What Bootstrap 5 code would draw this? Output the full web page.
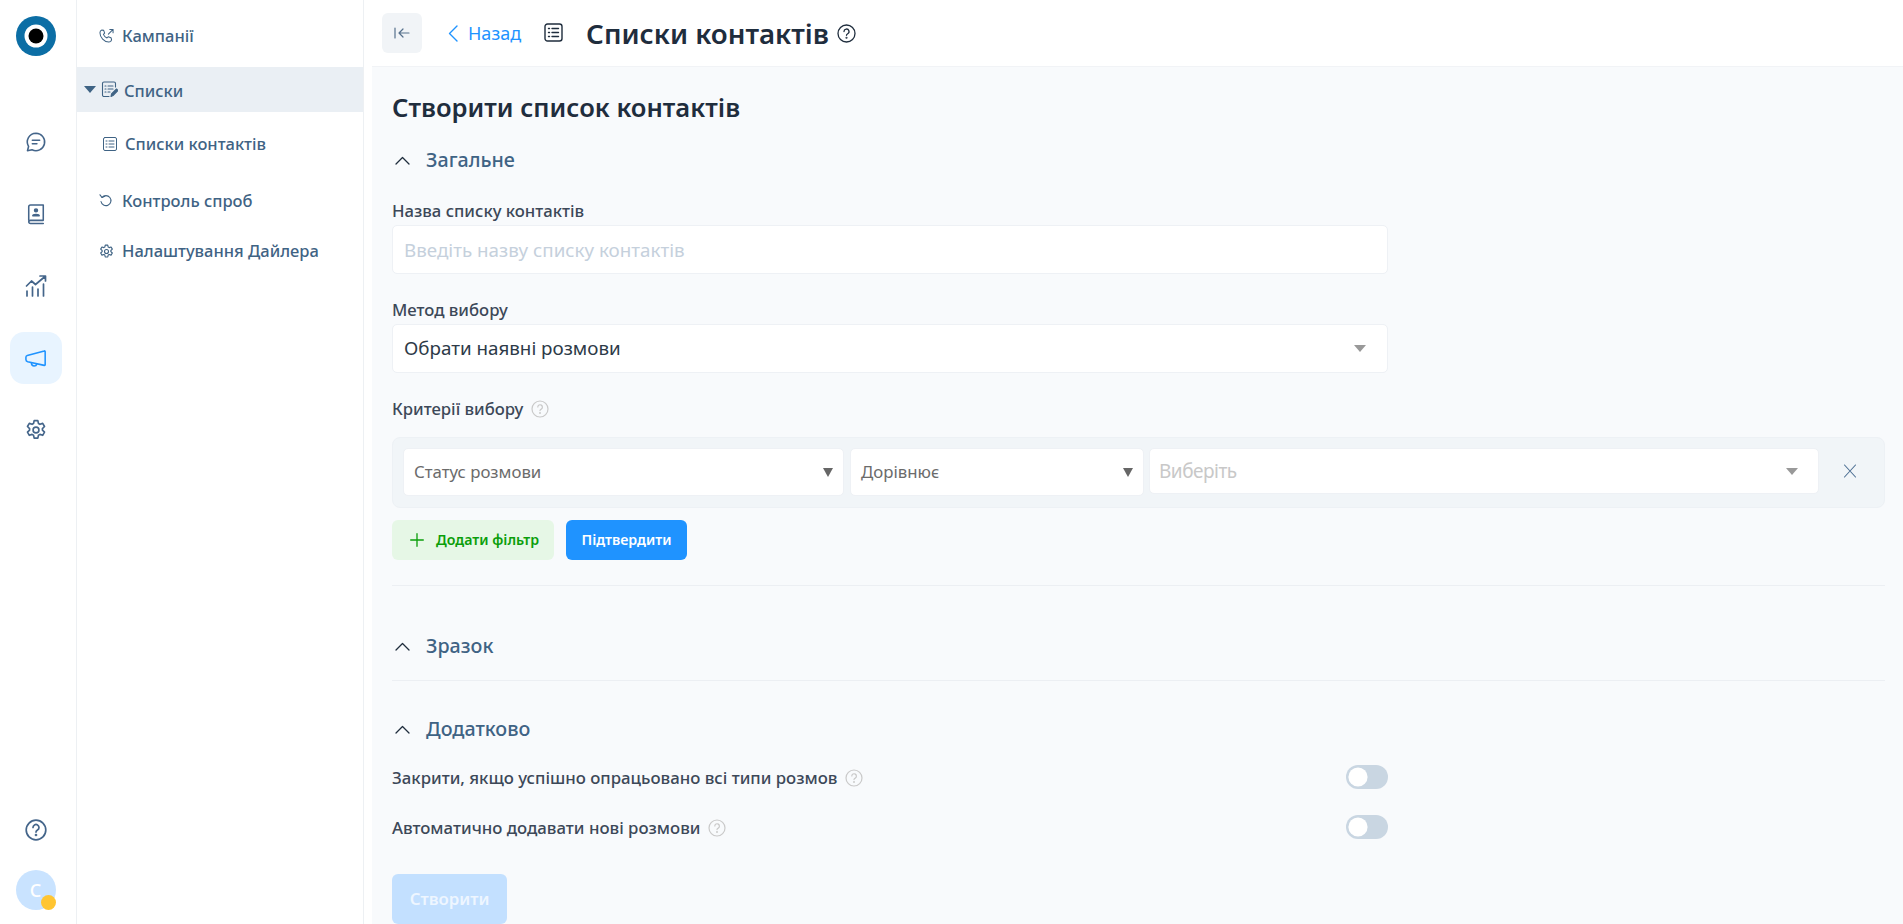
<!DOCTYPE html>
<html lang="uk">
<head>
  <meta charset="UTF-8">
  <title>Списки контактів</title>
  <link href="https://cdn.jsdelivr.net/npm/bootstrap@5.3.3/dist/css/bootstrap.min.css" rel="stylesheet">
  <style>
    html, body { height: 100%; overflow: hidden; }
    body { font-family: "Noto Sans", sans-serif; color: #1f2d3d; background: #fff; }
    svg { display: block; flex: none; }

    .app-shell { height: 924px; }
    .rail { width: 77px; border-right: 1px solid #edf0f3; color: #3f6384; padding-right: 4px; }
    .rail-logo { margin-top: 16px; width: 40px; height: 40px; }
    .rail-btn { width: 52px; height: 52px; border-radius: 14px; color: #44658a; }
    .rail-btn.is-on { background: #e8f4ff; color: #1f93ff; }
    .rail-mid { margin-top: 60px; gap: 20px; }
    .rail-foot { margin-bottom: 14px; }
    .avatar-c { width: 40px; height: 40px; border-radius: 50%; background: #c9e3ff; color: #fff; font-size: 18px; font-weight: 500; margin-top: 29px; padding-right: 1px; }
    .avatar-dot { width: 15px; height: 15px; border-radius: 50%; background: #ffc532; right: 0; bottom: 0; }

    .side { width: 287px; border-right: 1px solid #edf0f3; color: #3f6384; font-size: 16.5px; font-weight: 500; }
    .side-row { gap: 8px; padding-left: 22px; color: #3f6384; text-decoration: none; }
    .side-head { height: 45px; background: #eaeff4; padding-left: 7px; gap: 5px; font-weight: 500; }
    .side-head span:last-child { padding-top: 3px; margin-left: 1px; }
    .side-caret { width: 0; height: 0; border-left: 6px solid transparent; border-right: 6px solid transparent; border-top: 7px solid #3f6384; }

    .top-bar { height: 66px; padding-left: 18px; }
    .back-toggle { width: 40px; height: 40px; border-radius: 6px; background: #f1f4f7; color: #56708c; border: 0; padding: 0; }
    .back-link { color: #1f93ff; text-decoration: none; font-size: 18px; margin-left: 26px; gap: 10px; }
    .list-mark { margin-left: 23px; margin-bottom: 2px; }
    .page-title { font-size: 27.7px; font-weight: 600; margin: 0 0 0 23px; color: #1f2d3d; line-height: 1.3; }

    .work { background: #f8fafc; margin-left: 8px; padding: 20px 18px 0 20px; border-top: 1px solid #f1f3f6; min-height: 0; }
    .work-title { font-size: 25.6px; font-weight: 600; line-height: 42px; margin: 0; color: #1f2d3d; }
    .sect-head { gap: 16px; font-size: 19.7px; font-weight: 500; color: #3f6384; line-height: 26px; height: 26px; }
    .sect-chev { margin-left: 3px; }
    .form-narrow { width: 996px; }
    .f-label { font-size: 16.7px; font-weight: 500; color: #3c4858; line-height: 22px; margin: 0; }
    .f-box { height: 49px; border: 1px solid #eef1f5; border-radius: 5px; font-size: 18.8px; color: #2d3a48; padding: 0 11px; box-shadow: none; }
    .f-box::placeholder { color: #c5d0dc; }
    .q-mark { width: 18px; height: 18px; }
    .caret-d { width: 0; height: 0; border-left: 6px solid transparent; border-right: 6px solid transparent; border-top: 7px solid #999; }
    .caret-pad { margin-right: 10px; }
    .crit-panel { background: #f1f5f8; border: 1px solid #edf1f5; border-radius: 8px; height: 71px; padding: 10px 10px 0; gap: 6px; margin-top: 17px; }
    .crit-cell { height: 48px; background: #fff; border: 1px solid #eef1f5; border-radius: 5px; padding: 0 10px; font-size: 16.8px; color: #6b6b6b; }
    .crit-a { width: 441px; }
    .crit-b { width: 294px; margin-right: -1px; }
    .crit-c { flex: 1 1 0; height: 46px; color: #c8c8c8; font-size: 19px; letter-spacing: -.5px; padding-left: 9px; }
    .crit-x { width: 48px; height: 46px; margin-left: 1px; color: #4c6f93; }
    .caret-s { border-left-width: 5px; border-right-width: 5px; border-top: 9px solid #666; }
    .act-add, .act-ok { height: 40px; border-radius: 6px; border: 0; font-size: 14.2px; font-weight: 600; }
    .act-add { width: 162px; background: #e6f7e6; color: #0a9e0a; gap: 12px; padding: 0 0 0 18px; }
    .act-ok { width: 121px; background: #1f93ff; color: #fff; }
    .line-rule { height: 1px; background: #eceff3; }
    .opt-row { height: 24px; font-size: 16.8px; font-weight: 500; color: #3c4858; }
    .form-switch .tgl { width: 42px; height: 24px; margin: 0; float: none; background-color: #c9d6e2; border: 0; box-shadow: none;
      background-image: url("data:image/svg+xml,%3Csvg xmlns='http://www.w3.org/2000/svg' viewBox='-4 -4 8 8'%3E%3Ccircle r='3.2' fill='%23fff'/%3E%3C/svg%3E"); background-position: left center; }
    .form-switch.tgl-wrap { padding: 0; min-height: 0; margin: 0; }
    .act-make { width: 115px; height: 50px; border: 0; border-radius: 6px; background: #c3e0ff; color: #eef6ff; font-size: 16.8px; font-weight: 600; }
  </style>
</head>
<body>
  <div class="app-shell d-flex">

    <!-- icon rail -->
    <aside class="rail d-flex flex-column align-items-center flex-none">
      <svg class="rail-logo" viewBox="0 0 40 40">
        <circle cx="20" cy="20" r="20" fill="#0c6ea5"/>
        <circle cx="20" cy="20" r="11.5" fill="#fff"/>
        <circle cx="20" cy="20" r="7.5" fill="#000"/>
      </svg>
      <div class="rail-mid d-flex flex-column align-items-center">
        <a class="rail-btn d-flex align-items-center justify-content-center">
          <svg width="22" height="22" viewBox="0 0 24 24" fill="none" stroke="currentColor" stroke-width="1.7" stroke-linecap="round" stroke-linejoin="round"><path d="M12 2.5a9.500 9.500 0 1 1-4.300 18l-5 1 1.200-4.600A9.500 9.500 0 0 1 12 2.500z"/><path d="M8 10h8M8 14h5"/></svg>
        </a>
        <a class="rail-btn d-flex align-items-center justify-content-center">
          <svg width="20" height="22" viewBox="0 0 22 24" fill="none" stroke="currentColor" stroke-width="1.7" stroke-linecap="round" stroke-linejoin="round"><path d="M3 19V4a2 2 0 0 1 2-2h14v17H5a2 2 0 0 0-2 2v0a2 2 0 0 0 2 1.500h14"/><circle cx="11" cy="8" r="1.600" fill="currentColor"/><path d="M7.500 14c0-2 7-2 7 0z" fill="currentColor"/></svg>
        </a>
        <a class="rail-btn d-flex align-items-center justify-content-center">
          <svg width="22" height="22" viewBox="0 0 22 22" fill="none" stroke="currentColor" stroke-width="1.700" stroke-linecap="round" stroke-linejoin="round"><path d="M1.500 11l5-5 4 3.500L20 1.500M15 1h5.500v5M2 16v5M7.500 12v9M13 14v7M18.500 9v12"/></svg>
        </a>
        <a class="rail-btn is-on d-flex align-items-center justify-content-center">
          <svg width="22" height="19" viewBox="0 0 24 20" fill="none" stroke="currentColor" stroke-width="1.700" stroke-linecap="round" stroke-linejoin="round"><path d="M22 2.500v14.200c0 .6-.4 1-1 .8L3 13.500c-1.500-.4-2-1.200-2-2.500V8.500c0-.8.500-1.500 1.500-1.800L21 1.700c.6-.2 1 .2 1 .8z"/><path d="M7 15c0 2 1.300 3.200 3 3.200s2.600-1 3-2.200"/></svg>
        </a>
        <a class="rail-btn d-flex align-items-center justify-content-center">
          <svg width="22" height="22" viewBox="0 0 24 24" fill="none" stroke="currentColor" stroke-width="1.800" stroke-linejoin="round"><circle cx="12" cy="12" r="3.200"/><path d="M10 1.800h4l.7 3.100 1.600.9 3-1 2 3.400-2.300 2.200v1.800l2.300 2.200-2 3.400-3-1-1.600.9-.7 3.100h-4l-.7-3.100-1.600-.9-3 1-2-3.400 2.300-2.200v-1.800L2.700 8.200l2-3.400 3 1 1.600-.9z"/></svg>
        </a>
      </div>
      <div class="rail-foot mt-auto d-flex flex-column align-items-center">
        <svg width="22" height="22" viewBox="0 0 22 22" fill="none" stroke="#44658a" stroke-width="1.700" stroke-linecap="round"><circle cx="11" cy="11" r="9.800"/><path d="M8 8.500a3 3 0 1 1 4.500 2.600c-1 .6-1.500 1-1.500 2"/><circle cx="11" cy="16" r=".5"/></svg>
        <div class="avatar-c position-relative d-flex align-items-center justify-content-center">C<span class="avatar-dot position-absolute"></span></div>
      </div>
    </aside>

    <!-- section menu -->
    <nav class="side d-flex flex-column flex-none">
      <a class="side-row d-flex align-items-center" style="margin-top:25px;height:22px">
        <svg width="15" height="16" viewBox="0 0 16 16" fill="none" stroke="currentColor" stroke-width="1.100" stroke-linecap="round" stroke-linejoin="round"><path d="M3 1.500l2 .5 1 3-1.300 1.300c.7 1.800 2 3 3.800 3.800L9.800 8.800l3 1 .6 2.200c-.3 1.500-1.500 2.500-3 2.500C5.500 14.500 1 9.500 1 4.500c0-1.500.8-2.600 2-3z"/><path d="M10 6l5-5M11.500 1H15v3.500"/></svg>
        Кампанії
      </a>
      <div class="side-head d-flex align-items-center" style="margin-top:20px">
        <span class="side-caret"></span>
        <svg width="17" height="17" viewBox="0 0 17 17" fill="none" stroke="currentColor" stroke-width="1.100" stroke-linecap="round" stroke-linejoin="round"><path d="M14.500 6V2.500a1.500 1.500 0 0 0-1.500-1.500H3a1.500 1.500 0 0 0-1.500 1.500V14A1.500 1.500 0 0 0 3 15.500h5"/><path d="M4 5h1M7 5h5M4 8h1M7 8h5M4 11h1M7 11h2"/><path d="M10 15.500l.5-2.500 5-5 1.500 1.500-5 5z" fill="currentColor"/></svg>
        <span>Списки</span>
      </div>
      <a class="side-row d-flex align-items-center" style="margin-top:21px;height:22px;padding-left:26px">
        <svg width="14" height="14" viewBox="0 0 14 14" fill="none" stroke="currentColor" stroke-width="1" stroke-linecap="round"><rect x=".5" y=".5" width="13" height="13" rx="1.500"/><path d="M3 4h1M6 4h5M3 7h1M6 7h5M3 10h1M6 10h5"/></svg>
        Списки контактів
      </a>
      <a class="side-row d-flex align-items-center" style="margin-top:35px;height:22px">
        <svg width="15" height="14" viewBox="0 0 15 14" fill="none" stroke="currentColor" stroke-width="1.100" stroke-linecap="round" stroke-linejoin="round"><path d="M3 3.500a5 5 0 1 1-1 4"/><path d="M1 .8L3 3.500 5.800 2.300"/></svg>
        Контроль спроб
      </a>
      <a class="side-row d-flex align-items-center" style="margin-top:28px;height:22px">
        <svg width="15" height="15" viewBox="0 0 24 24" fill="none" stroke="currentColor" stroke-width="1.800" stroke-linejoin="round"><circle cx="12" cy="12" r="3.200"/><path d="M10 1.800h4l.7 3.100 1.600.9 3-1 2 3.400-2.300 2.200v1.800l2.300 2.200-2 3.400-3-1-1.600.9-.7 3.100h-4l-.7-3.100-1.600-.9-3 1-2-3.400 2.300-2.200v-1.800L2.700 8.200l2-3.400 3 1 1.600-.9z"/></svg>
        Налаштування Дайлера
      </a>
    </nav>

    <!-- main column -->
    <div class="flex-grow-1 d-flex flex-column" style="min-width:0">
      <header class="top-bar d-flex align-items-center flex-none">
        <button class="back-toggle d-flex align-items-center justify-content-center">
          <svg width="16" height="12" viewBox="0 0 16 12" fill="none" stroke="currentColor" stroke-width="1.200" stroke-linecap="round" stroke-linejoin="round"><path d="M1 1v10M15 6H5M9 2L5 6l4 4"/></svg>
        </button>
        <a class="back-link d-flex align-items-center">
          <svg width="10" height="17" viewBox="0 0 10 17" fill="none" stroke="currentColor" stroke-width="1.400" stroke-linecap="round" stroke-linejoin="round"><path d="M9 1L1.500 8.500 9 16"/></svg>
          Назад
        </a>
        <svg class="list-mark" width="19" height="19" viewBox="0 0 19 19" fill="none" stroke="#1f2d3d" stroke-width="1.400" stroke-linecap="round"><rect x="1" y="1" width="17" height="17" rx="2.500"/><path d="M4.500 5.500h1M8 5.500h6.500M4.500 9.500h1M8 9.500h6.500M4.500 13.500h1M8 13.500h6.500"/></svg>
        <h1 class="page-title">Списки контактів</h1>
        <svg class="ms-2" width="19" height="19" viewBox="0 0 19 19" fill="none" stroke="#1f2d3d" stroke-width="1.300" stroke-linecap="round"><circle cx="9.500" cy="9.500" r="8.500"/><path d="M7 7.500a2.500 2.500 0 1 1 3.700 2.200c-.8.500-1.200.8-1.200 1.600"/><circle cx="9.500" cy="13.800" r=".4"/></svg>
      </header>

      <main class="work flex-grow-1 overflow-hidden">
        <h2 class="work-title">Створити список контактів</h2>

        <div class="sect-head d-flex align-items-center" style="margin-top:18px">
          <svg class="sect-chev" width="15" height="9" viewBox="0 0 15 9" fill="none" stroke="#1f2d3d" stroke-width="1.300" stroke-linecap="round" stroke-linejoin="round"><path d="M1 8l6.500-6.500L14 8"/></svg>
          <span>Загальне</span>
        </div>

        <div class="form-narrow">
          <label class="f-label d-block" style="margin-top:27px" for="listName">Назва списку контактів</label>
          <input id="listName" class="form-control f-box" style="margin-top:3px" placeholder="Введіть назву списку контактів">
          <label class="f-label d-block" style="margin-top:25px">Метод вибору</label>
          <div class="form-control f-box d-flex align-items-center justify-content-between" style="margin-top:3px">
            <span class="ms-px">Обрати наявні розмови</span>
            <span class="caret-d caret-pad"></span>
          </div>
          <div class="f-label d-flex align-items-center gap-2" style="margin-top:25px">
            Критерії вибору
            <svg class="q-mark" viewBox="0 0 18 18" fill="none" stroke="#c9c9c9" stroke-width="1.200" stroke-linecap="round"><circle cx="9" cy="9" r="8"/><path d="M6.800 7a2.300 2.300 0 1 1 3.400 2.100c-.8.400-1.200.8-1.200 1.500"/><circle cx="9" cy="13" r=".4"/></svg>
          </div>
        </div>

        <div class="crit-panel d-flex align-items-start">
          <div class="crit-cell crit-a d-flex align-items-center justify-content-between"><span>Статус розмови</span><span class="caret-d caret-s"></span></div>
          <div class="crit-cell crit-b d-flex align-items-center justify-content-between"><span>Дорівнює</span><span class="caret-d caret-s"></span></div>
          <div class="crit-cell crit-c d-flex align-items-center justify-content-between"><span>Виберіть</span><span class="caret-d caret-pad"></span></div>
          <div class="crit-x d-flex align-items-center justify-content-center flex-none">
            <svg width="14" height="14" viewBox="0 0 14 14" fill="none" stroke="currentColor" stroke-width="1.100" stroke-linecap="round"><path d="M1.500 1L12.500 13M12.500 1L1.500 13"/></svg>
          </div>
        </div>

        <div class="d-flex" style="gap:12px;margin-top:12px">
          <button class="act-add d-flex align-items-center">
            <svg width="14" height="14" viewBox="0 0 14 14" fill="none" stroke="currentColor" stroke-width="1.300" stroke-linecap="round"><path d="M7 .7v12.600M.7 7h12.600"/></svg>
            Додати фільтр
          </button>
          <button class="act-ok">Підтвердити</button>
        </div>

        <div class="line-rule" style="margin-top:25px"></div>

        <div class="sect-head d-flex align-items-center" style="margin-top:47px">
          <svg class="sect-chev" width="15" height="9" viewBox="0 0 15 9" fill="none" stroke="#1f2d3d" stroke-width="1.300" stroke-linecap="round" stroke-linejoin="round"><path d="M1 8l6.500-6.500L14 8"/></svg>
          <span>Зразок</span>
        </div>
        <div class="line-rule" style="margin-top:21px"></div>

        <div class="sect-head d-flex align-items-center" style="margin-top:35px">
          <svg class="sect-chev" width="15" height="9" viewBox="0 0 15 9" fill="none" stroke="#1f2d3d" stroke-width="1.300" stroke-linecap="round" stroke-linejoin="round"><path d="M1 8l6.500-6.500L14 8"/></svg>
          <span>Додатково</span>
        </div>

        <div class="form-narrow">
          <div class="opt-row d-flex align-items-center justify-content-between" style="margin-top:24px">
            <span class="d-flex align-items-center gap-2">Закрити, якщо успішно опрацьовано всі типи розмов
              <svg class="q-mark" viewBox="0 0 18 18" fill="none" stroke="#c9c9c9" stroke-width="1.200" stroke-linecap="round"><circle cx="9" cy="9" r="8"/><path d="M6.800 7a2.300 2.300 0 1 1 3.400 2.100c-.8.400-1.200.8-1.200 1.500"/><circle cx="9" cy="13" r=".4"/></svg>
            </span>
            <div class="form-check form-switch tgl-wrap"><input class="form-check-input tgl" type="checkbox" role="switch"></div>
          </div>
          <div class="opt-row d-flex align-items-center justify-content-between" style="margin-top:26px">
            <span class="d-flex align-items-center gap-2">Автоматично додавати нові розмови
              <svg class="q-mark" viewBox="0 0 18 18" fill="none" stroke="#c9c9c9" stroke-width="1.200" stroke-linecap="round"><circle cx="9" cy="9" r="8"/><path d="M6.800 7a2.300 2.300 0 1 1 3.400 2.100c-.8.400-1.200.8-1.200 1.500"/><circle cx="9" cy="13" r=".4"/></svg>
            </span>
            <div class="form-check form-switch tgl-wrap"><input class="form-check-input tgl" type="checkbox" role="switch"></div>
          </div>
          <button class="act-make" style="margin-top:34px" disabled>Створити</button>
        </div>
      </main>
    </div>
  </div>

  <script src="https://cdn.jsdelivr.net/npm/bootstrap@5.3.3/dist/js/bootstrap.bundle.min.js"></script>
</body>
</html>
